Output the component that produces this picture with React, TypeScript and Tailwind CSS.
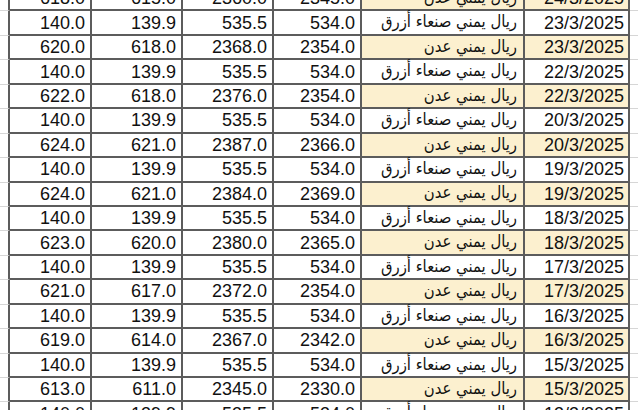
const SANAA = 'ريال يمني صنعاء أزرق'
const ADEN = 'ريال يمني عدن'

type Row = { a: string; b: string; c: string; d: string; name: string; date: string }

const blue = (date: string): Row => ({ a: '140.0', b: '139.9', c: '535.5', d: '534.0', name: SANAA, date })

const ROWS: Row[] = [
  { a: '618.0', b: '615.0', c: '2360.0', d: '2345.0', name: ADEN, date: '24/3/2025' },
  blue('23/3/2025'),
  { a: '620.0', b: '618.0', c: '2368.0', d: '2354.0', name: ADEN, date: '23/3/2025' },
  blue('22/3/2025'),
  { a: '622.0', b: '618.0', c: '2376.0', d: '2354.0', name: ADEN, date: '22/3/2025' },
  blue('20/3/2025'),
  { a: '624.0', b: '621.0', c: '2387.0', d: '2366.0', name: ADEN, date: '20/3/2025' },
  blue('19/3/2025'),
  { a: '624.0', b: '621.0', c: '2384.0', d: '2369.0', name: ADEN, date: '19/3/2025' },
  blue('18/3/2025'),
  { a: '623.0', b: '620.0', c: '2380.0', d: '2365.0', name: ADEN, date: '18/3/2025' },
  blue('17/3/2025'),
  { a: '621.0', b: '617.0', c: '2372.0', d: '2354.0', name: ADEN, date: '17/3/2025' },
  blue('16/3/2025'),
  { a: '619.0', b: '614.0', c: '2367.0', d: '2342.0', name: ADEN, date: '16/3/2025' },
  blue('15/3/2025'),
  { a: '613.0', b: '611.0', c: '2345.0', d: '2330.0', name: ADEN, date: '15/3/2025' },
  blue('13/3/2025'),
]

const cell = 'h-full flex items-center justify-end border-r-2 border-b-2 border-[#5c5c5c] leading-none whitespace-nowrap'

function TableRow({ row }: { row: Row }) {
  const aden = row.name === ADEN
  const bg = aden ? 'bg-[#fcf0cf]' : 'bg-white'
  return (
    <div className="flex h-[24.45px] shrink-0">
      <div className="w-[10px] h-full border-r-2 border-b border-r-[#5c5c5c] border-b-[#d6d6d6]" />
      <div className={`w-[82px] pr-[5px] ${cell}`}>{row.a}</div>
      <div className={`w-[91px] pr-[5px] ${cell}`}>{row.b}</div>
      <div className={`w-[91px] pr-[5px] ${cell}`}>{row.c}</div>
      <div className={`w-[88px] pr-[5px] ${cell}`}>{row.d}</div>
      <div className={`w-[163px] pr-[6px] ${cell} ${bg}`}>
        <span
          dir="rtl"
          className="text-[16.5px]"
          style={{ fontFamily: '"DejaVu Sans Condensed", "DejaVu Sans", sans-serif' }}
        >
          {row.name}
        </span>
      </div>
      <div className={`w-[105px] pr-[4px] ${cell} ${bg}`}>{row.date}</div>
      <div className="flex-1 h-full border-b border-[#d6d6d6]" />
    </div>
  )
}

export default function App() {
  return (
    <div
      className="w-[638px] h-[410px] overflow-hidden bg-white text-[18px] text-[#111111]"
      style={{ fontFamily: '"Liberation Sans", "DejaVu Sans", Arial, sans-serif' }}
    >
      <div className="flex flex-col mt-[-13px]">
        {ROWS.map((r, i) => (
          <TableRow key={i} row={r} />
        ))}
      </div>
    </div>
  )
}
